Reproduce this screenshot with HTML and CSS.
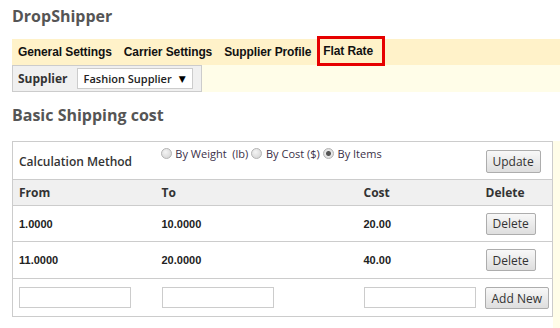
FILE: index.html
```html
<!DOCTYPE html>
<html lang="en">
<head>
    <meta charset="UTF-8">
    <meta name="viewport" content="width=device-width, initial-scale=1.0">
    <title>DropShipper - Flat Rate</title>
    <link rel="stylesheet" href="styles.css">
</head>
<body>
    <div class="page">
        <h1 class="title">DropShipper</h1>
        <div class="tabs">
            <span class="tab">General Settings</span>
            <span class="tab">Carrier Settings</span>
            <span class="tab">Supplier Profile</span>
            <span class="tab active">Flat Rate</span>
        </div>
        <div class="subbar">
            <div class="supplier">
                <span class="supplier-label">Supplier</span>
                <div class="select">
                    <span>Fashion Supplier</span>
                    <span class="arrow">&#9660;</span>
                </div>
            </div>
        </div>
        <h2 class="heading">Basic Shipping cost</h2>
        <div class="content">
            <div class="main">
                <table class="rates">
                    <colgroup>
                        <col class="col-from">
                        <col class="col-to">
                        <col class="col-cost">
                        <col class="col-del">
                    </colgroup>
                    <tr class="method-row">
                        <td class="label">Calculation Method</td>
                        <td colspan="2" class="methods">
                            <span class="radio"></span> By Weight&nbsp; (lb)
                            <span class="radio"></span> By Cost ($)
                            <span class="radio checked"></span> By Items
                        </td>
                        <td><button class="btn">Update</button></td>
                    </tr>
                    <tr class="head-row">
                        <th>From</th>
                        <th>To</th>
                        <th>Cost</th>
                        <th>Delete</th>
                    </tr>
                    <tr class="data-row">
                        <td>1.0000</td>
                        <td>10.0000</td>
                        <td>20.00</td>
                        <td><button class="btn small">Delete</button></td>
                    </tr>
                    <tr class="data-row">
                        <td>11.0000</td>
                        <td>20.0000</td>
                        <td>40.00</td>
                        <td><button class="btn small">Delete</button></td>
                    </tr>
                    <tr class="new-row">
                        <td><input type="text" class="field"></td>
                        <td><input type="text" class="field"></td>
                        <td><input type="text" class="field"></td>
                        <td><button class="btn add">Add New</button></td>
                    </tr>
                </table>
            </div>
            <div class="aside"></div>
        </div>
    </div>
</body>
</html>
```

FILE: styles.css
```css
body {
    margin: 0;
    background-color: #fff;
    font-family: "Open Sans", "DejaVu Sans", sans-serif;
    color: #333;
}

.page {
    padding-left: 12px;
}

.title {
    margin: 0;
    padding: 5px 0 12px;
    font-size: 16px;
    line-height: 22px;
    color: #555;
}

.tabs {
    display: flex;
    height: 26px;
    align-items: center;
    background-color: #fff2c9;
    font-family: "Liberation Sans", Arial, sans-serif;
    font-size: 12px;
    font-weight: bold;
    color: #111;
    letter-spacing: -0.1px;
}

.tab {
    padding: 0 6px 0 6px;
}

.tab.active {
    align-self: flex-start;
    margin-top: -3px;
    height: 24px;
    line-height: 25px;
    padding: 0 9px 0 3px;
    border: 3px solid #e60000;
}

.subbar {
    display: flex;
    height: 27px;
    background-color: #fffde8;
}

.supplier {
    display: flex;
    align-items: center;
    gap: 9px;
    width: 190px;
    padding-left: 5px;
    border: 1px solid #ccc;
    background-color: #f0f0f0;
    box-sizing: border-box;
}

.supplier-label {
    font-size: 12px;
    font-weight: bold;
    color: #333;
}

.select {
    display: flex;
    align-items: center;
    justify-content: space-between;
    width: 116px;
    height: 21px;
    padding: 0 6px;
    border: 1px solid #ccc;
    background-color: #fff;
    box-sizing: border-box;
    font-size: 11px;
    font-weight: 600;
    color: #222;
}

.arrow {
    font-size: 9px;
    color: #000;
}

.heading {
    margin: 0;
    padding: 12px 0 15px;
    font-size: 16px;
    line-height: 22px;
    color: #555;
}

.content {
    display: flex;
}

.main {
    padding-bottom: 12px;
    background-color: #fff;
}

.aside {
    flex: 1;
    background-color: #fffde8;
}

.rates {
    width: 540px;
    border-collapse: collapse;
    border: 1px solid #ccc;
    table-layout: fixed;
}

.col-from { width: 143px; }
.col-to { width: 202px; }
.col-cost { width: 122px; }
.col-del { width: 73px; }

.rates td,
.rates th {
    padding: 0 0 0 6px;
    text-align: left;
    vertical-align: middle;
    border-top: 1px solid #ccc;
}

.method-row {
    height: 38px;
}

.method-row .label {
    padding-top: 2px;
    font-size: 12px;
    font-weight: 600;
}

.method-row .methods {
    vertical-align: top;
    padding: 4px 0 0 5px;
    font-size: 11px;
    color: #3b3048;
}

.radio {
    display: inline-block;
    width: 9px;
    height: 9px;
    margin-right: 1px;
    border: 1px solid #b5b5b5;
    border-radius: 50%;
    background: radial-gradient(circle at 40% 35%, #f4f4f4, #cfcfcf);
    vertical-align: -1px;
}

.radio.checked {
    background: radial-gradient(circle, #555 0, #555 2px, #e8e8e8 3px, #cfcfcf);
}

.head-row {
    height: 26px;
}

.head-row th {
    background-color: #f0f0f0;
    font-size: 12px;
    font-weight: bold;
    color: #333;
}

.data-row {
    height: 36px;
}

.data-row + .data-row {
    height: 37px;
}

.data-row td {
    font-family: "Liberation Sans", Arial, sans-serif;
    font-size: 11px;
    font-weight: bold;
    color: #222;
}

.new-row {
    height: 38px;
}

.field {
    display: block;
    width: 112px;
    height: 21px;
    margin: 0;
    padding: 0 3px;
    border: 1px solid #ccc;
    box-sizing: border-box;
}

.btn {
    height: 23px;
    padding: 0 6px;
    border: 1px solid #adadad;
    border-radius: 2px;
    background: linear-gradient(#f8f8f8, #dedede);
    font-family: "Open Sans", "DejaVu Sans", sans-serif;
    font-size: 12px;
    color: #333;
    cursor: pointer;
}

.btn.small {
    height: 22px;
}

.btn.add {
    height: 22px;
    margin-left: -1px;
}

.btn:active {
    background: #ddd;
}
```
